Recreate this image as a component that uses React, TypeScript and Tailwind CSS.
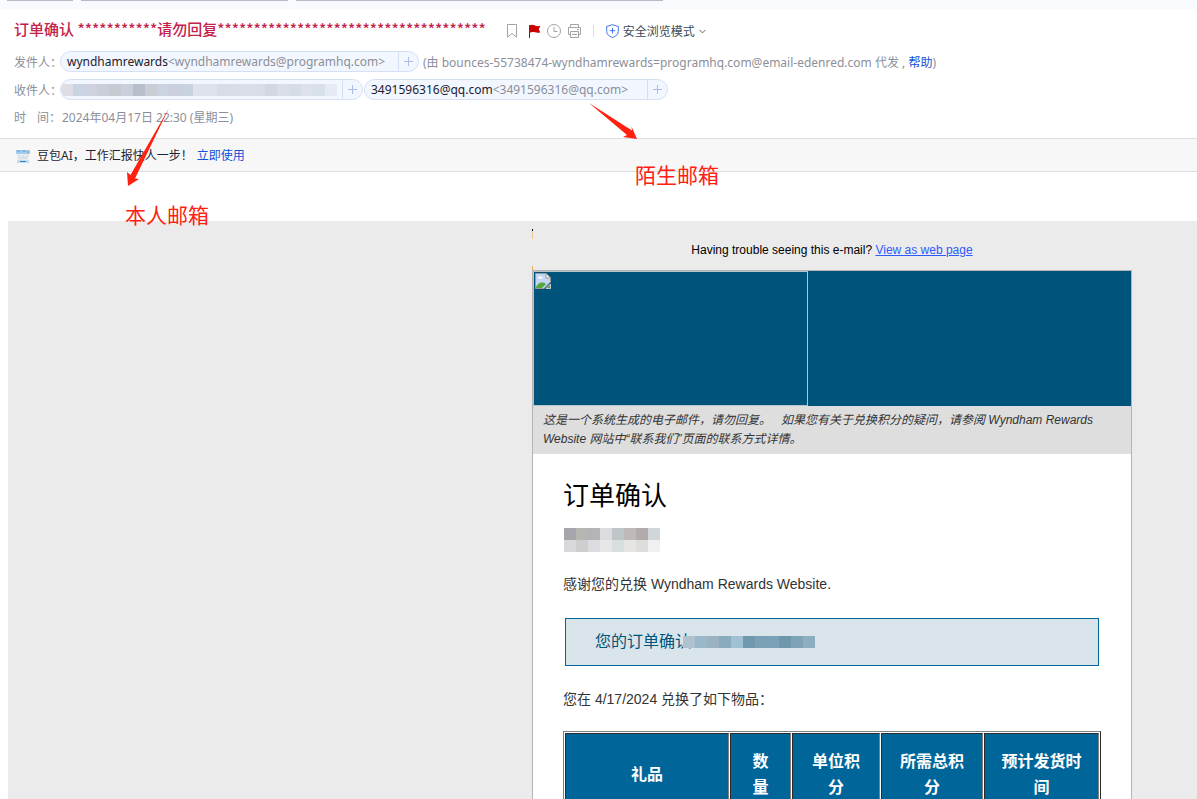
import type { ReactNode } from 'react';
import { ChevronDown } from 'lucide-react';

const senderTiles = [
  '#dedde6', '#c9d3e1', '#d0d1df', '#cbced6', '#c6cad3', '#cacfdc', '#b8bfca', '#c9ced4',
  '#cbd3e0', '#ccd0dc', '#c9d3e0', '#dde2ec', '#dfe2ea', '#d7dce6', '#d9dee6', '#dadee7',
  '#d9dde6', '#d3d7e1', '#dadee6', '#d5dce6', '#dde1ea', '#d8e0ea', '#e5eaf3'
];

const nameTiles = [
  ['#a7a6ac', '#b6b6b3', '#b5b3b6', '#dcdcde', '#c0c5ca', '#bfbab9', '#b0acab', '#d1d6da'],
  ['#d9d9db', '#cecece', '#dcdce0', '#e7e7e8', '#d9dfe0', '#e7e5e4', '#dddddb', '#eff1f1']
];

const orderTiles = [
  '#afc2cf', '#9bb8ca', '#9ab2c1', '#8aaabd', '#a0c0d3', '#7099ae', '#7b9fb5', '#7ba1b8',
  '#6e97aa', '#7fa3b6', '#8daebf'
];

const columns = [
  { label: '礼品', width: 'w-[164px]' },
  { label: '数量', width: 'w-[61px]' },
  { label: '单位积分', width: 'w-[88px]' },
  { label: '所需总积分', width: 'w-[102px]' },
  { label: '预计发货时间', width: 'w-[115px]' }
];

function AddressChip({ width, children }: { width: string; children: ReactNode }) {
  return (
    <span className={`${width} flex h-[21px] items-stretch overflow-hidden rounded-full border border-[#d5e0f5] bg-[#f2f6ff] leading-[19px]`}>
      <span className="flex flex-1 items-center pl-[6px]">{children}</span>
      <button aria-label="添加联系人" className="flex w-5 items-center justify-center border-l border-[#d5e0f5]">
        <svg width="9" height="9" viewBox="0 0 9 9" stroke="#a9bde6" strokeWidth="1">
          <path d="M4.5 0v9M0 4.5h9" />
        </svg>
      </button>
    </span>
  );
}

function Toolbar() {
  return (
    <div className="flex items-center pt-0.5 text-[#a3a3a3]">
      <button aria-label="书签">
        <svg width="12" height="14" viewBox="0 0 12 14" fill="none" stroke="currentColor">
          <path d="M1.5 .5h9v12.7L6 9.5l-4.5 3.7z" />
        </svg>
      </button>
      <button aria-label="标记" className="ml-[11px]">
        <svg width="12" height="14" viewBox="0 0 12 14" fill="#c80000">
          <path d="M0 1h1v13H0zM1 1.5C3 .3 4.500 1 6 1.600s3 .9 5.500.2L9.800 5l1.400 3.400c-2 .6-3.700.4-5.200-.1S3 7.700 1 8.500z" />
        </svg>
      </button>
      <button aria-label="稍后处理" className="ml-[6px]">
        <svg width="14" height="14" viewBox="0 0 14 14" fill="none" stroke="currentColor">
          <circle cx="7" cy="7" r="6.500" />
          <path d="M7 3v4.500h3.500" />
        </svg>
      </button>
      <button aria-label="打印" className="ml-[7px]">
        <svg width="13" height="14" viewBox="0 0 13 14" fill="none" stroke="currentColor">
          <path d="M2.500 3.500v-3h8v3M2.500 10.500h-2v-7h12v7h-2M2.500 7.500h8v6h-8zM4 10.500h5M9 5.500h2" />
        </svg>
      </button>
      <span className="ml-3 h-3 w-px bg-[#dddddd]" />
      <button className="ml-3 flex items-center text-xs text-[#414a59]">
        <svg className="mr-1" width="13" height="14" viewBox="0 0 13 14" fill="none" stroke="#3f74e8">
          <path d="M6.500.7 12.300 2.500v5c0 3-2.500 4.800-5.800 6-3.300-1.200-5.800-3-5.800-6v-5zM6.500 4v5.500M3.800 6.700h5.400" />
        </svg>
        <span className="pt-0.5">安全浏览模式</span>
        <ChevronDown className="ml-0.5" size={11} color="#555" />
      </button>
    </div>
  );
}

function MailHeader() {
  return (
    <header className="px-[14px] text-xs text-[#8b8f99]">
      <div className="flex h-[42px] items-center gap-5">
        <h1 className="pb-0.5 font-['Noto_Sans_CJK_SC',sans-serif] text-[15px] leading-5 font-medium whitespace-nowrap text-[#c4214a]">
          订单确认 ***********请勿回复*************************************
        </h1>
        <Toolbar />
      </div>
      <div className="flex h-[21px] items-center">
        <span className="w-[46px] pt-0.5 whitespace-nowrap">发件人：</span>
        <AddressChip width="w-[359px]">
          <span className="text-[#1c2230]">wyndhamrewards</span>&lt;wyndhamrewards@programhq.com&gt;
        </AddressChip>
        <span className="ml-1 pt-0.5 whitespace-nowrap">
          (由 bounces-55738474-wyndhamrewards=programhq.com@email-edenred.com 代发 ,{' '}
          <a href="#help" className="text-[#1450d8]">帮助</a>)
        </span>
      </div>
      <div className="mt-[7px] flex h-[21px] items-center">
        <span className="w-[46px] pt-0.5 whitespace-nowrap">收件人：</span>
        <AddressChip width="w-[303px]">
          <span className="-ml-[6px] flex">
            {senderTiles.map((color, i) => (
              <i key={i} className="h-3 w-3 shrink-0" style={{ backgroundColor: color }} />
            ))}
          </span>
        </AddressChip>
        <span className="ml-px">
          <AddressChip width="w-[304px]">
            <span className="text-[#1c2230]">3491596316@qq.com</span>&lt;3491596316@qq.com&gt;
          </AddressChip>
        </span>
      </div>
      <div className="mt-[7px] flex h-[21px] items-center pt-px">
        <span className="flex w-12 gap-[11px] whitespace-nowrap">
          <span>时</span>
          <span>间：</span>
        </span>
        <span>2024年04月17日 22:30 (星期三)</span>
      </div>
    </header>
  );
}

function AiBanner() {
  return (
    <div className="mt-[10px] flex h-[34px] items-center border-y border-[#dedede] bg-[#f7f7f7] pt-0.5 pl-4 text-xs text-[#1f2430]">
      <svg width="14" height="14" viewBox="0 0 14 14">
        <path d="M0 1h14v4H0z" fill="#a5cbee" />
        <path d="M1 2h3M6 2h4M11 3h2" stroke="#5c9edb" />
        <path d="M1 5h12v6H1z" fill="#e8edf0" />
        <path d="M2 7h2M6 7h2M10 7h2M3 9h8" stroke="#c8d4dc" />
        <path d="M1 11h12v3H1z" fill="#c3def3" />
        <path d="M4 12.500h6" stroke="#3481c4" />
      </svg>
      <span className="ml-[7px]">豆包AI，工作汇报快人一步！</span>
      <a href="#try" className="ml-1 text-[#1450d8]">立即使用</a>
    </div>
  );
}

function BrokenImageIcon() {
  return (
    <svg width="16" height="16" viewBox="0 0 16 16">
      <path d="M.5.5h10.500l4.500 4.500v4L9 15.500H.5z" fill="#c4d6f5" stroke="#9a9a9a" />
      <path d="M11 .5V5h4.500z" fill="#fff" stroke="#9a9a9a" />
      <path d="M3 5.500a2 2 0 0 1 3.500-1.500A1.500 1.500 0 0 1 8 5.500z" fill="#fff" />
      <path d="M1 14c2-4 6-6 10-3l-4 4H1z" fill="#53a939" />
      <path d="m11 15.500 4.500-4.500v4.500z" fill="#53a939" stroke="#c8c8c8" />
    </svg>
  );
}

function MailBody() {
  return (
    <main className="mt-[49px] ml-2 bg-[#ebebeb] font-['Liberation_Sans','Noto_Sans_CJK_SC',sans-serif]">
      <div className="relative ml-[524px] w-[600px]">
        <span className="absolute top-2 left-0 h-2.5 w-px border-t-2 border-black bg-[#f0c690]" />
        <span className="absolute top-[45px] left-0 h-1 w-px bg-[#f0b060]" />
        <p className="pt-[21px] pb-[11px] text-center text-xs leading-[17px] text-black">
          Having trouble seeing this e-mail?{' '}
          <a href="#web" className="text-[#2d5bff] underline">View as web page</a>
        </p>
        <article className="border border-[#b3b3b3] bg-white text-[#333]">
          <div className="bg-[#00537a]">
            <div className="h-[135px] w-[275px] border border-[#b9c4ca] p-px">
              <BrokenImageIcon />
            </div>
          </div>
          <p className="bg-[#dedede] px-[10px] py-[5px] text-xs leading-[19px] whitespace-nowrap italic">
            这是一个系统生成的电子邮件，请勿回复。 &nbsp; 如果您有关于兑换积分的疑问，请参阅 Wyndham Rewards
            <br />
            Website 网站中“联系我们”页面的联系方式详情。
          </p>
          <section className="px-[30px] pt-[26px]">
            <h2 className="text-[26px] leading-8 text-black">订单确认</h2>
            <div className="mt-4 ml-px w-24">
              {nameTiles.map((row, i) => (
                <div key={i} className="flex">
                  {row.map((color, j) => (
                    <i key={j} className="h-3 w-3" style={{ backgroundColor: color }} />
                  ))}
                </div>
              ))}
            </div>
            <p className="mt-[22px] text-sm leading-5">感谢您的兑换 Wyndham Rewards Website.</p>
            <div className="mx-0.5 mt-6 flex h-12 items-center border border-[#006699] bg-[#dae5eb] pl-[29px] text-base text-[#00537a]">
              <span className="whitespace-nowrap">您的订单确认</span>
              <span className="-ml-2 flex">
                {orderTiles.map((color, i) => (
                  <i key={i} className="h-3 w-3" style={{ backgroundColor: color }} />
                ))}
              </span>
            </div>
            <p className="mt-[23px] text-sm leading-5">您在 4/17/2024 兑换了如下物品：</p>
            <table className="mt-[22px] w-[538px] table-fixed border-separate border-spacing-px border border-t-[#808080] border-r-[#2c2c2c] border-b-[#2c2c2c] border-l-[#808080] text-base leading-[26px] text-white">
              <thead>
                <tr>
                  {columns.map((col) => (
                    <th
                      key={col.label}
                      className={`${col.width} border border-t-[#2c2c2c] border-r-[#808080] border-b-[#808080] border-l-[#2c2c2c] bg-[#006699] px-[14px] pt-[15px] pb-[13px] font-bold`}
                    >
                      {col.label}
                    </th>
                  ))}
                </tr>
              </thead>
            </table>
          </section>
        </article>
      </div>
    </main>
  );
}

// Red callouts drawn over the message
function Annotations() {
  return (
    <div className="pointer-events-none text-[21px] leading-6 text-[#ff2010]">
      <svg className="absolute top-[104px] left-[120px]" width="56" height="86" viewBox="0 0 56 86" fill="currentColor">
        <path d="M49 4 15 74.500l4 .5L8 82 7 68l3.500 3z" />
      </svg>
      <span className="absolute top-[203px] left-[125px]">本人邮箱</span>
      <svg className="absolute top-[100px] left-[586px]" width="56" height="44" viewBox="0 0 56 44" fill="currentColor">
        <path d="M3 3 46 30.500l-.5-4L51 39l-14-2 4-2z" />
      </svg>
      <span className="absolute top-[163px] left-[635px]">陌生邮箱</span>
    </div>
  );
}

export default function App() {
  return (
    <div className="relative h-screen overflow-hidden bg-white font-['Noto_Sans','Noto_Sans_CJK_SC',sans-serif]">
      <div className="flex h-[9px] gap-2 bg-[#f9fafe] pl-[7px]">
        <div className="h-px w-[66px] bg-[#b6b9c6]" />
        <div className="h-px w-[207px] bg-[#b6b9c6]" />
        <div className="h-px w-[367px] bg-[#b6b9c6]" />
      </div>
      <MailHeader />
      <AiBanner />
      <MailBody />
      <Annotations />
    </div>
  );
}
